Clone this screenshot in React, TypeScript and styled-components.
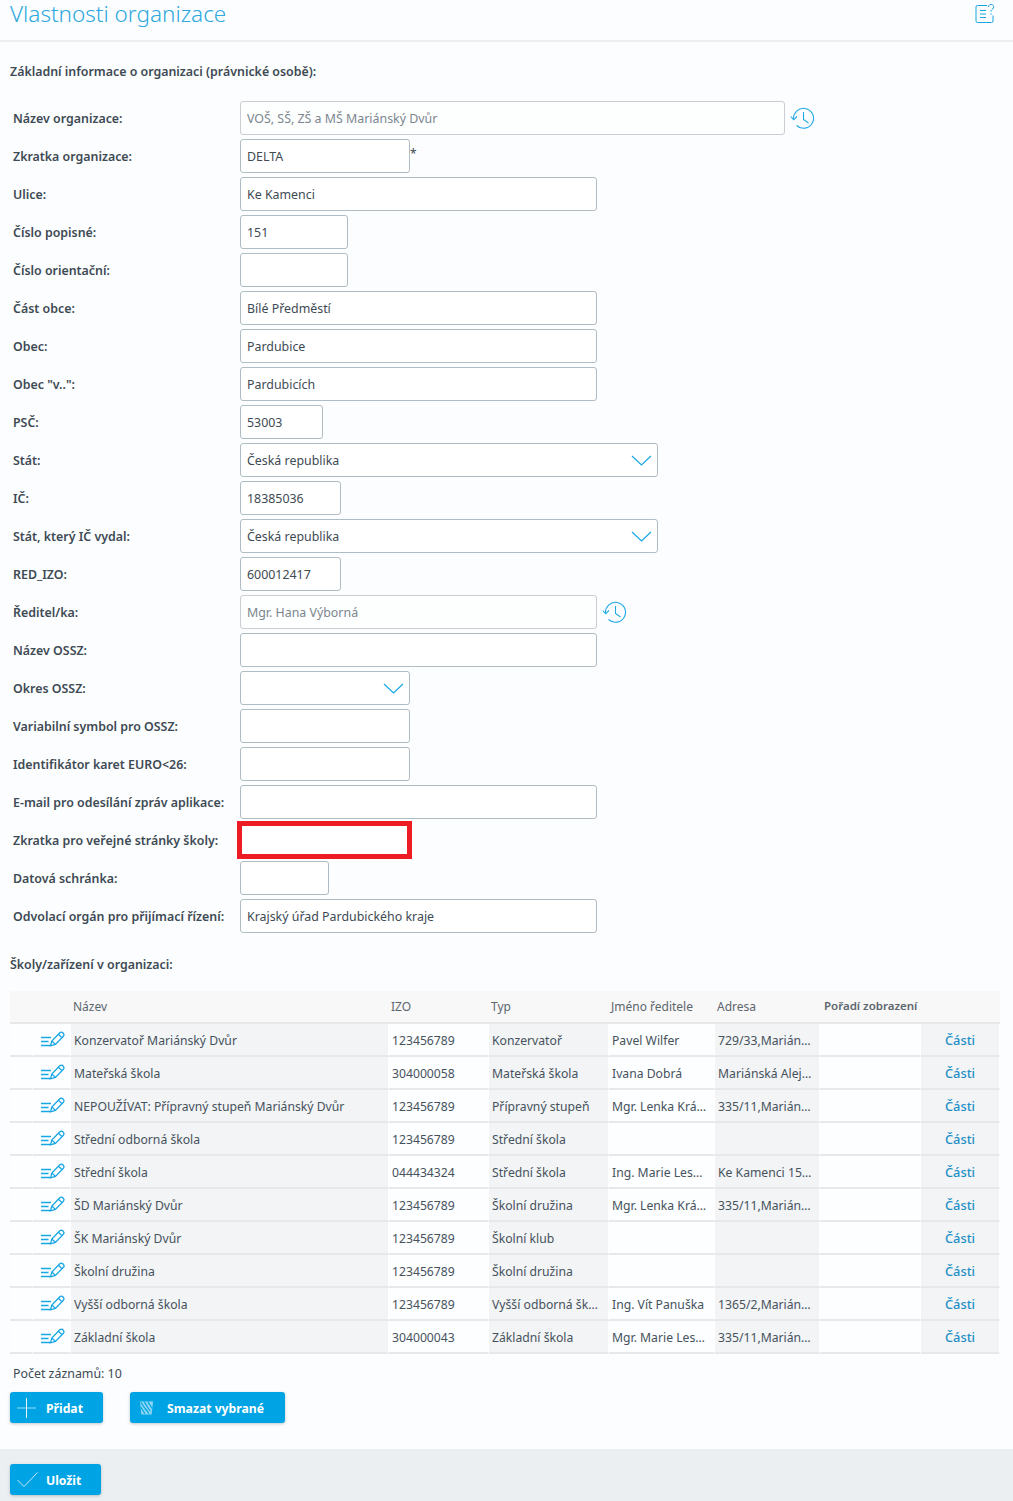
import React from 'react';
import styled, { createGlobalStyle } from 'styled-components';

const GlobalStyle = createGlobalStyle`
  html, body {
    margin: 0;
    padding: 0;
    background: #fbfdfe;
  }

  body {
    font: normal normal 400 12.4px/1.25 'Noto Sans', sans-serif;
    color: #3e4a54;
  }
`;

const Page = styled.div`
  display: flex;
  flex-direction: column;
  width: 1013px;
  min-height: 1501px;
`;

const Header = styled.header`
  display: flex;
  align-items: flex-start;
  justify-content: space-between;
  box-sizing: border-box;
  height: 42px;
  padding: 0 18px 0 10px;
  border-bottom: 2px solid #eceef0;
`;

const Title = styled.h1`
  margin: 0;
  font: normal normal 300 22.5px/28px 'Noto Sans', sans-serif;
  color: #2ea9e0;
`;

const HelpButton = styled.span`
  display: flex;
  margin-top: 4px;
  color: #18a6e4;
`;

const Content = styled.main`
  flex: 1;
  padding: 22px 10px 0;
`;

const SectionTitle = styled.h2`
  margin: 0;
  font: normal normal 600 12.4px/16px 'Noto Sans', sans-serif;
  color: #3e4a54;
`;

const Form = styled.div`
  display: flex;
  flex-direction: column;
  gap: 4px;
  margin-top: 21px;
`;

const Row = styled.div`
  display: flex;
  align-items: center;
  height: 34px;
`;

const Label = styled.label`
  flex: none;
  box-sizing: border-box;
  width: 230px;
  padding: 1px 0 0 3px;
  font-size: 12.4px;
  font-weight: 600;
  white-space: nowrap;
  color: #3e4a54;
`;

const Input = styled.input<{ $width: number }>`
  box-sizing: border-box;
  width: ${(p) => p.$width}px;
  height: 34px;
  padding: 0 6px;
  font: normal normal 400 12.4px/1.25 'Noto Sans', sans-serif;
  color: #3e4a54;
  background: #fff;
  border: 1px solid #b0bcc4;
  border-radius: 3px;

  &:disabled {
    color: #7c868e;
    background: #fdfefe;
    border-color: #c8ced2;
  }
`;

const ErrorInput = styled(Input)`
  width: 175px;
  height: 38px;
  margin-left: -3px;
  border: 5px solid #ed1c24;
  border-radius: 0;
`;

const SelectBox = styled.div<{ $width: number }>`
  display: flex;
  align-items: center;
  justify-content: space-between;
  box-sizing: border-box;
  width: ${(p) => p.$width}px;
  height: 34px;
  padding: 1px 5px 0 6px;
  font-size: 12.4px;
  background: #fff;
  border: 1px solid #b0bcc4;
  border-radius: 3px;

  & svg {
    margin-left: auto;
  }
`;

const Required = styled.span`
  align-self: flex-start;
  margin-top: 8px;
  font-size: 12px;
  line-height: 14px;
`;

const HistoryButton = styled.span`
  display: flex;
  margin-left: 5px;
  color: #22a9e6;
`;

const SecondTitle = styled(SectionTitle)`
  margin-top: 24px;
`;

const Table = styled.table`
  width: 990px;
  margin-top: 18px;
  border-spacing: 0;
  border-collapse: separate;
  table-layout: fixed;
`;

const Th = styled.th<{ $bold?: boolean }>`
  box-sizing: border-box;
  height: 33px;
  padding: 0 2px 0 ${(p) => (p.$bold ? 4 : 2)}px;
  font-size: ${(p) => (p.$bold ? 11.5 : 12)}px;
  font-weight: ${(p) => (p.$bold ? 600 : 400)};
  color: #5c666e;
  text-align: left;
  white-space: nowrap;
  background: #f8f8f8;
  border-bottom: 2px solid #e6e8ea;
`;

const Td = styled.td<{ $shaded?: boolean }>`
  box-sizing: border-box;
  height: 33px;
  padding: 2px 0 0 3px;
  font-size: 12.2px;
  color: #46525c;
  white-space: nowrap;
  background: ${(p) => (p.$shaded ? '#f2f4f6' : '#fdfeff')};
  background-clip: padding-box;
  border-right: 1px solid #fff;
  border-bottom: 2px solid #e6e8ea;
`;

const IconCell = styled(Td)`
  padding: 3px 0 0 8px;
  color: #18a6e4;
`;

const PartsCell = styled(Td)`
  padding: 1px 0 0;
  text-align: center;
`;

const PartsLink = styled.a`
  font-size: 12.8px;
  font-weight: 500;
  color: #1f8fc6;
`;

const Count = styled.div`
  margin: 12px 0 0 3px;
  font-size: 12.4px;
  line-height: 16px;
`;

const Actions = styled.div`
  display: flex;
  gap: 27px;
  margin-top: 10px;
`;

const Button = styled.button<{ $width: number; $iconLeft: number }>`
  display: flex;
  align-items: center;
  box-sizing: border-box;
  width: ${(p) => p.$width}px;
  height: 31px;
  padding: 0 0 0 ${(p) => p.$iconLeft}px;
  font: normal normal 700 12.2px/1 'Noto Sans', sans-serif;
  color: #fff;
  background: #00a4e4;
  border: 0;
  border-radius: 3px;
  box-shadow: 0 1px 3px rgba(60, 80, 100, 0.3);

  & svg {
    flex: none;
  }
`;

const ButtonText = styled.span<{ $gap: number }>`
  margin-left: ${(p) => p.$gap}px;
  padding-top: 4px;
`;

const Footer = styled.footer`
  box-sizing: border-box;
  height: 52px;
  margin-top: 26px;
  padding: 15px 10px 0;
  background: #eceff1;
`;

const HelpIcon = () => (
  <svg width='20' height='20' viewBox='0 0 20 20' fill='none' stroke='currentColor' strokeWidth='1'>
    <path d='M12 1.5H2.5A1.5 1.5 0 0 0 1 3v14a1.5 1.5 0 0 0 1.5 1.5h14a1.5 1.5 0 0 0 1.5-1.5v-5.5' />
    <path d='M5 6.5h6M5 10h6M5 13.5h6' />
    <path d='M13.5 3a2.6 2.6 0 1 1 4.2 2c-1 .8-1.7 1.3-1.7 2.7' />
    <circle cx='16' cy='10' r='.7' fill='currentColor' stroke='none' />
  </svg>
);

const HistoryIcon = () => (
  <svg width='25' height='23' viewBox='0 0 25 23' fill='none' stroke='currentColor' strokeWidth='1.1'>
    <path d='M3.6 12.5a10 10 0 1 1 3 6' />
    <path d='M0.8 9.5l2.9 3.3L7 9.5' />
    <path d='M13.5 5v7.5l5 3.5' />
  </svg>
);

const ChevronIcon = () => (
  <svg width='21' height='11' viewBox='0 0 21 11' fill='none' stroke='#18a6e4' strokeWidth='1.2'>
    <path d='M1 1l9.5 9L20 1' />
  </svg>
);

const EditIcon = () => (
  <svg width='25' height='17' viewBox='0 0 25 17' fill='none' stroke='currentColor' strokeWidth='1.3'>
    <path d='M0 6.5h10M0 10.5h7.5M0 14.5h9' />
    <path d='M9.5 14.8l1.3-4.8 8-8.2a2 2 0 0 1 3 0l.6.7a2 2 0 0 1 0 2.8l-8 8.1z' />
    <path d='M10.8 10l3.6 3.4M17.4 3.2l3.6 3.4' />
  </svg>
);

const PlusIcon = () => (
  <svg width='20' height='20' viewBox='0 0 20 20' stroke='#fff' strokeWidth='1'>
    <path d='M0 10h19' opacity='0.6' />
    <path d='M9.5 0v20' opacity='0.9' />
  </svg>
);

const TrashIcon = () => (
  <svg width='15' height='16' viewBox='0 0 16 16' fill='none'>
    <path d='M1 1h14l-1.5 14h-11z' fill='#fff' opacity='0.55' />
    <path d='M2 2l6 9M5.5 1.5l6.5 10M9.5 1.5l4.5 7M1.8 7l4.5 7M7 8.5l3.5 5.5' stroke='#00a4e4' strokeWidth='1.2' />
  </svg>
);

const CheckIcon = () => (
  <svg width='21' height='15' viewBox='0 0 21 15' fill='none' stroke='#fff' strokeWidth='1'>
    <path d='M0.5 8l6.5 6.5L20.5 0.5' opacity='0.75' />
  </svg>
);

interface FieldData {
  label: string;
  value?: string;
  width: number;
  kind?: 'select' | 'history' | 'error' | 'required';
}

const fields: FieldData[] = [
  { label: 'Název organizace:', value: 'VOŠ, SŠ, ZŠ a MŠ Mariánský Dvůr', width: 545, kind: 'history' },
  { label: 'Zkratka organizace:', value: 'DELTA', width: 170, kind: 'required' },
  { label: 'Ulice:', value: 'Ke Kamenci', width: 357 },
  { label: 'Číslo popisné:', value: '151', width: 108 },
  { label: 'Číslo orientační:', width: 108 },
  { label: 'Část obce:', value: 'Bílé Předměstí', width: 357 },
  { label: 'Obec:', value: 'Pardubice', width: 357 },
  { label: 'Obec "v..":', value: 'Pardubicích', width: 357 },
  { label: 'PSČ:', value: '53003', width: 83 },
  { label: 'Stát:', value: 'Česká republika', width: 418, kind: 'select' },
  { label: 'IČ:', value: '18385036', width: 101 },
  { label: 'Stát, který IČ vydal:', value: 'Česká republika', width: 418, kind: 'select' },
  { label: 'RED_IZO:', value: '600012417', width: 101 },
  { label: 'Ředitel/ka:', value: 'Mgr. Hana Výborná', width: 357, kind: 'history' },
  { label: 'Název OSSZ:', width: 357 },
  { label: 'Okres OSSZ:', width: 170, kind: 'select' },
  { label: 'Variabilní symbol pro OSSZ:', width: 170 },
  { label: 'Identifikátor karet EURO<26:', width: 170 },
  { label: 'E-mail pro odesílání zpráv aplikace:', width: 357 },
  { label: 'Zkratka pro veřejné stránky školy:', width: 170, kind: 'error' },
  { label: 'Datová schránka:', width: 89 },
  { label: 'Odvolací orgán pro přijímací řízení:', value: 'Krajský úřad Pardubického kraje', width: 357 },
];

const schools = [
  ['Konzervatoř Mariánský Dvůr', '123456789', 'Konzervatoř', 'Pavel Wilfer', '729/33,Marián…'],
  ['Mateřská škola', '304000058', 'Mateřská škola', 'Ivana Dobrá', 'Mariánská Alej…'],
  ['NEPOUŽÍVAT: Přípravný stupeň Mariánský Dvůr', '123456789', 'Přípravný stupeň', 'Mgr. Lenka Krá…', '335/11,Marián…'],
  ['Střední odborná škola', '123456789', 'Střední škola', '', ''],
  ['Střední škola', '044434324', 'Střední škola', 'Ing. Marie Les…', 'Ke Kamenci 15…'],
  ['ŠD Mariánský Dvůr', '123456789', 'Školní družina', 'Mgr. Lenka Krá…', '335/11,Marián…'],
  ['ŠK Mariánský Dvůr', '123456789', 'Školní klub', '', ''],
  ['Školní družina', '123456789', 'Školní družina', '', ''],
  ['Vyšší odborná škola', '123456789', 'Vyšší odborná šk…', 'Ing. Vít Panuška', '1365/2,Marián…'],
  ['Základní škola', '304000043', 'Základní škola', 'Mgr. Marie Les…', '335/11,Marián…'],
];

const columnWidths = [23, 38, 318, 100, 120, 106, 105, 101, 79];

const Field: React.FC<FieldData> = ({ label, value, width, kind }) => (
  <Row>
    <Label>{label}</Label>
    {kind === 'select' && (
      <SelectBox $width={width}>
        {value}
        <ChevronIcon />
      </SelectBox>
    )}
    {kind === 'error' && <ErrorInput $width={width} />}
    {kind !== 'select' && kind !== 'error' && (
      <Input $width={width} disabled={kind === 'history'} defaultValue={value} />
    )}
    {kind === 'history' && (
      <HistoryButton>
        <HistoryIcon />
      </HistoryButton>
    )}
    {kind === 'required' && <Required>*</Required>}
  </Row>
);

const App: React.FC = () => {
  return (
    <Page>
      <GlobalStyle />
      <Header>
        <Title>Vlastnosti organizace</Title>
        <HelpButton>
          <HelpIcon />
        </HelpButton>
      </Header>

      <Content>
        <SectionTitle>Základní informace o organizaci (právnické osobě):</SectionTitle>
        <Form>
          {fields.map((field) => (
            <Field key={field.label} {...field} />
          ))}
        </Form>

        <SecondTitle>Školy/zařízení v organizaci:</SecondTitle>
        <Table>
          <colgroup>
            {columnWidths.map((width, i) => (
              <col key={i} width={width} />
            ))}
          </colgroup>
          <thead>
            <tr>
              <Th />
              <Th />
              <Th>Název</Th>
              <Th>IZO</Th>
              <Th>Typ</Th>
              <Th>Jméno ředitele</Th>
              <Th>Adresa</Th>
              <Th $bold>Pořadí zobrazení</Th>
              <Th />
            </tr>
          </thead>
          <tbody>
            {schools.map((school) => (
              <tr key={school[0]}>
                <Td />
                <IconCell>
                  <EditIcon />
                </IconCell>
                <Td $shaded>{school[0]}</Td>
                <Td>{school[1]}</Td>
                <Td $shaded>{school[2]}</Td>
                <Td>{school[3]}</Td>
                <Td $shaded>{school[4]}</Td>
                <Td />
                <PartsCell $shaded>
                  <PartsLink>Části</PartsLink>
                </PartsCell>
              </tr>
            ))}
          </tbody>
        </Table>

        <Count>Počet záznamů: 10</Count>
        <Actions>
          <Button $width={93} $iconLeft={7}>
            <PlusIcon />
            <ButtonText $gap={9}>Přidat</ButtonText>
          </Button>
          <Button $width={155} $iconLeft={9}>
            <TrashIcon />
            <ButtonText $gap={13}>Smazat vybrané</ButtonText>
          </Button>
        </Actions>
      </Content>

      <Footer>
        <Button $width={91} $iconLeft={7}>
          <CheckIcon />
          <ButtonText $gap={8}>Uložit</ButtonText>
        </Button>
      </Footer>
    </Page>
  );
};

export default App;
